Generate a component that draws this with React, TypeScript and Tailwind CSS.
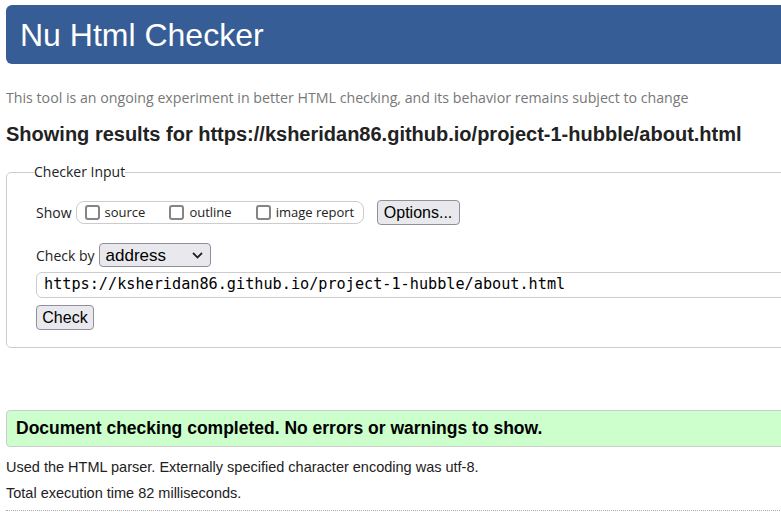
import React from 'react';

const ui = "font-['Open_Sans','Noto_Sans',sans-serif]";
const arial = "font-['Liberation_Sans',Arial,sans-serif]";

function Box({ label }: { label: string }) {
  return (
    <label className="flex items-center gap-[5px]">
      <span className="w-[15px] h-[15px] rounded-[3px] border-2 border-[#858585] bg-white" />
      <span className="text-[13px] text-[#222]">{label}</span>
    </label>
  );
}

export default function App() {
  return (
    <div className="w-[781px] h-[526px] overflow-hidden bg-white text-[#222]">
      <div className="w-[1000px] pl-[6px] pt-[5px]">
        <header className="h-[59px] rounded-l-[6px] bg-[#365d95] pl-[14px] flex items-center">
          <h1 className={`${arial} text-[32px] text-white leading-none`}>Nu Html Checker</h1>
        </header>

        <p className={`${ui} text-[14.2px] text-[#777] mt-[25px] leading-[18px]`}>
          This tool is an ongoing experiment in better HTML checking, and its behavior remains subject to change
        </p>

        <h2 className={`${arial} font-bold text-[20px] text-[#222] mt-[15px] leading-[24px]`}>
          Showing results for https://ksheridan86.github.io/project-1-hubble/about.html
        </h2>

        <fieldset className={`${ui} mt-[17px] border border-[#ccc] rounded-[5px] pl-[29px] pb-[17px] pt-[18px]`}>
          <legend className="text-[14px] text-[#222] ml-[-2px] leading-[18px]">Checker Input</legend>

          <div className="flex items-center h-[27px]">
            <span className="text-[14px] mr-[4px]">Show</span>
            <div className="flex items-center h-[23px] w-[288px] border border-[#ccc] rounded-[8px] pl-[8px] gap-[24px]">
              <Box label="source" />
              <Box label="outline" />
              <Box label="image report" />
            </div>
            <button className={`${arial} ml-[13px] h-[25px] w-[83px] rounded-[4px] border border-[#8f8f9d] bg-[#e9e9ed] text-[16px] text-black leading-none`}>
              Options...
            </button>
          </div>

          <div className="flex items-center mt-[17px] h-[24px]">
            <span className="text-[14px] mr-[4px]">Check by</span>
            <div className={`${arial} h-[24px] w-[112px] rounded-[4px] border border-[#8f8f9d] bg-[#e9e9ed] flex items-center pl-[6px] pr-[7px] justify-between`}>
              <span className="text-[17px] text-black leading-none">address</span>
              <svg width="11" height="7" viewBox="0 0 11 7" fill="none">
                <path d="M1 1l4.5 4.5L10 1" stroke="#222" strokeWidth="1.8" />
              </svg>
            </div>
          </div>

          <div className="mt-[5px] h-[26px] border border-[#ccc] rounded-l-[6px] flex items-center pl-[7px]">
            <span className="font-['DejaVu_Sans_Mono',monospace] text-[15.2px] text-black leading-none">
              https://ksheridan86.github.io/project-1-hubble/about.html
            </span>
          </div>

          <button className={`${arial} mt-[7px] h-[25px] w-[58px] rounded-[4px] border border-[#8f8f9d] bg-[#e9e9ed] text-[16px] text-black leading-none`}>
            Check
          </button>
        </fieldset>

        <div className="mt-[62px] h-[37px] border border-[#ccc] rounded-l-[4px] bg-[#ccffcc] flex items-center pl-[9px]">
          <span className={`${arial} font-bold text-[17.5px] text-black`}>
            Document checking completed. No errors or warnings to show.
          </span>
        </div>

        <p className={`${arial} text-[14.5px] text-[#222] mt-[11px] leading-[18px]`}>
          Used the HTML parser. Externally specified character encoding was utf-8.
        </p>
        <p className={`${arial} text-[14.5px] text-[#222] mt-[8px] leading-[18px]`}>
          Total execution time 82 milliseconds.
        </p>
        <div className="mt-[8px] border-t border-dotted border-[#aaa]" />
      </div>
    </div>
  );
}
